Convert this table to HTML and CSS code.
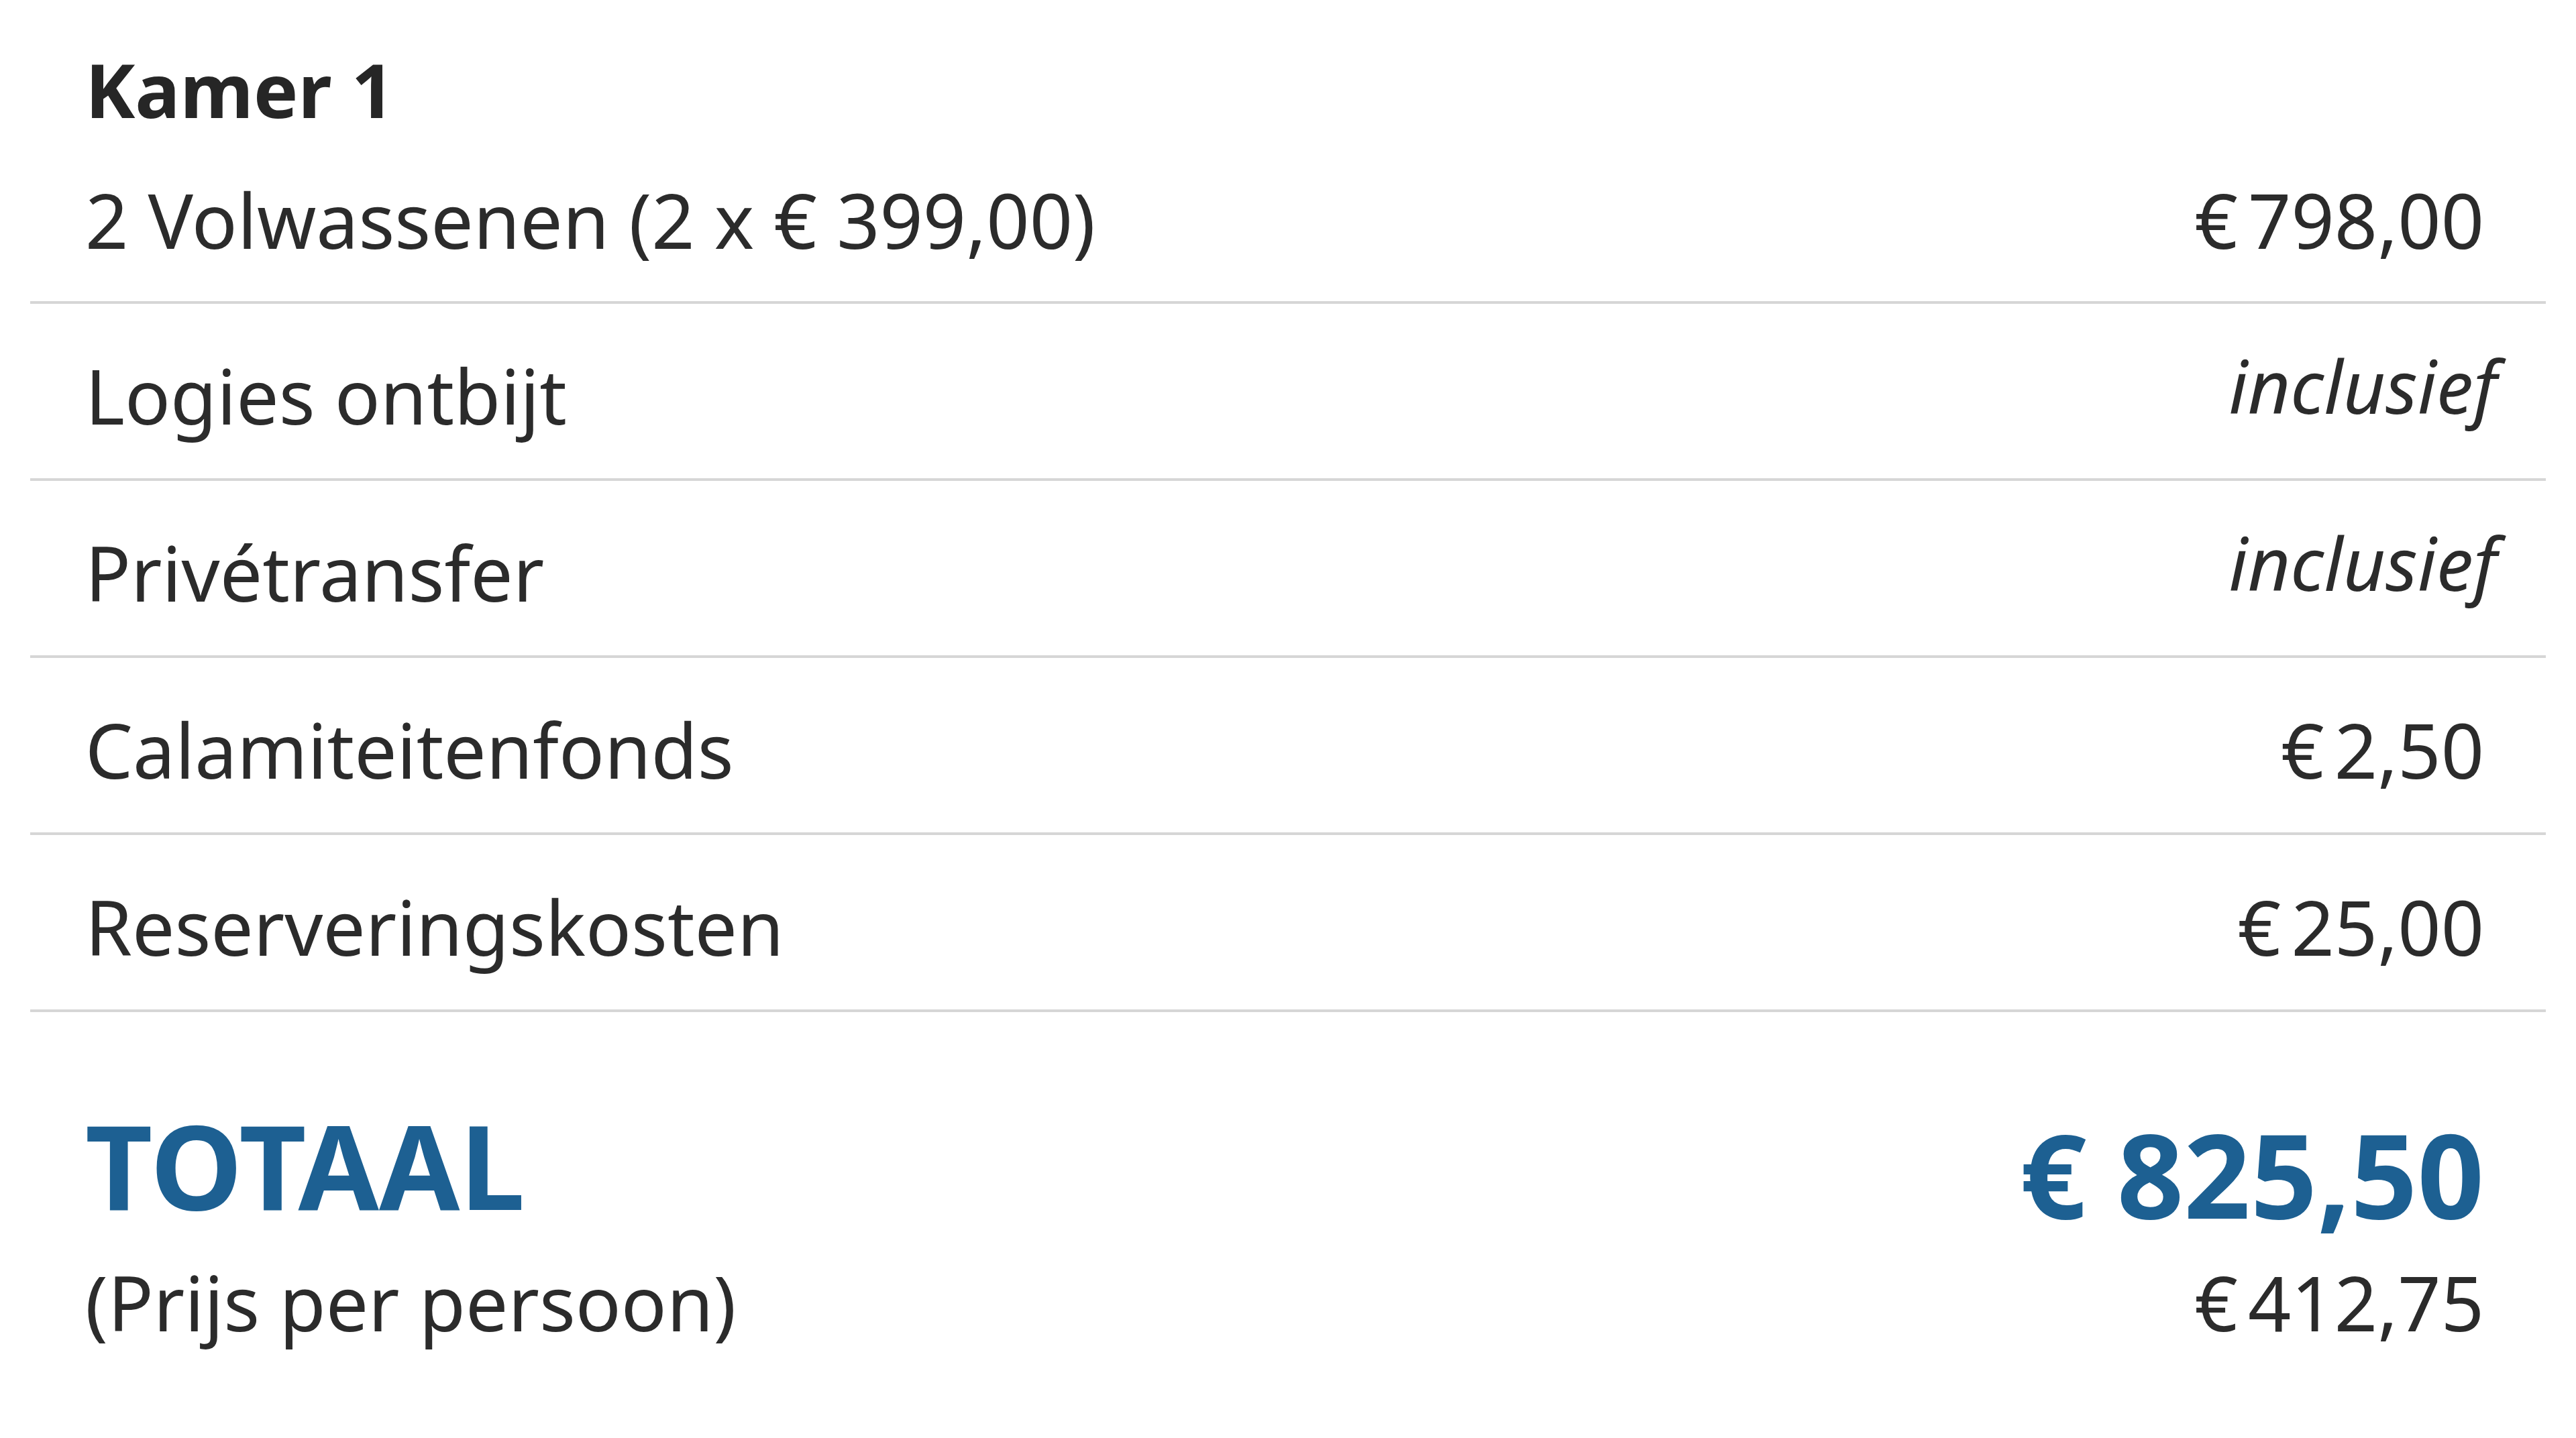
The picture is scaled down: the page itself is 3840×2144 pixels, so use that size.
FILE: index.html
```html
<!DOCTYPE html>
<html lang="nl">
<head>
<meta charset="utf-8">
<title>Prijsoverzicht</title>
<link rel="stylesheet" href="styles.css">
</head>
<body>
<section class="summary">
  <h2 class="room-title">Kamer 1</h2>
  <div class="row row--first">
    <span class="label">2 Volwassenen (2 x € 399,00)</span>
    <span class="price">€ 798,00</span>
  </div>
  <div class="row">
    <span class="label">Logies ontbijt</span>
    <span class="incl">inclusief</span>
  </div>
  <div class="row">
    <span class="label">Privétransfer</span>
    <span class="incl">inclusief</span>
  </div>
  <div class="row">
    <span class="label">Calamiteitenfonds</span>
    <span class="price">€ 2,50</span>
  </div>
  <div class="row">
    <span class="label">Reserveringskosten</span>
    <span class="price">€ 25,00</span>
  </div>
  <div class="total">
    <div class="total-line">
      <span class="total-label">TOTAAL</span>
      <span class="total-price">€ 825,50</span>
    </div>
    <div class="pp-line">
      <span class="label">(Prijs per persoon)</span>
      <span class="price">€ 412,75</span>
    </div>
  </div>
</section>
</body>
</html>
```
FILE: styles.css
```css
html, body {
  margin: 0;
  padding: 0;
  background: #ffffff;
}

body {
  font-family: "Noto Sans", "Open Sans", sans-serif;
  color: #2b2b2b;
  font-size: 112.5px;
  line-height: 150px;
}

.summary {
  margin-left: 45px;
  width: 3750px;
}

.room-title {
  margin: 0;
  padding: 58px 92px 0 82px;
  font-size: 112px;
  font-weight: 700;
  line-height: 150px;
  color: #262626;
}

.row {
  display: flex;
  justify-content: space-between;
  align-items: flex-start;
  padding: 62px 92px 48px 82px;
  border-bottom: 4px solid #d6d6d6;
}

.row--first {
  padding-top: 45px;
  padding-bottom: 46px;
}

.label {
  white-space: nowrap;
}

.price {
  white-space: nowrap;
  word-spacing: -14px;
}

.incl {
  font-style: italic;
  font-size: 110px;
  line-height: 118px;
  margin-right: -19px;
}

.total {
  padding: 128px 92px 0 82px;
}

.total-line {
  display: flex;
  justify-content: space-between;
  align-items: flex-start;
  color: #1d6092;
  font-weight: 700;
  font-size: 174px;
  line-height: 200px;
}

.total-price {
  padding-top: 13px;
  white-space: nowrap;
}

.pp-line {
  display: flex;
  justify-content: space-between;
  align-items: flex-start;
  margin-top: 17px;
}
```
